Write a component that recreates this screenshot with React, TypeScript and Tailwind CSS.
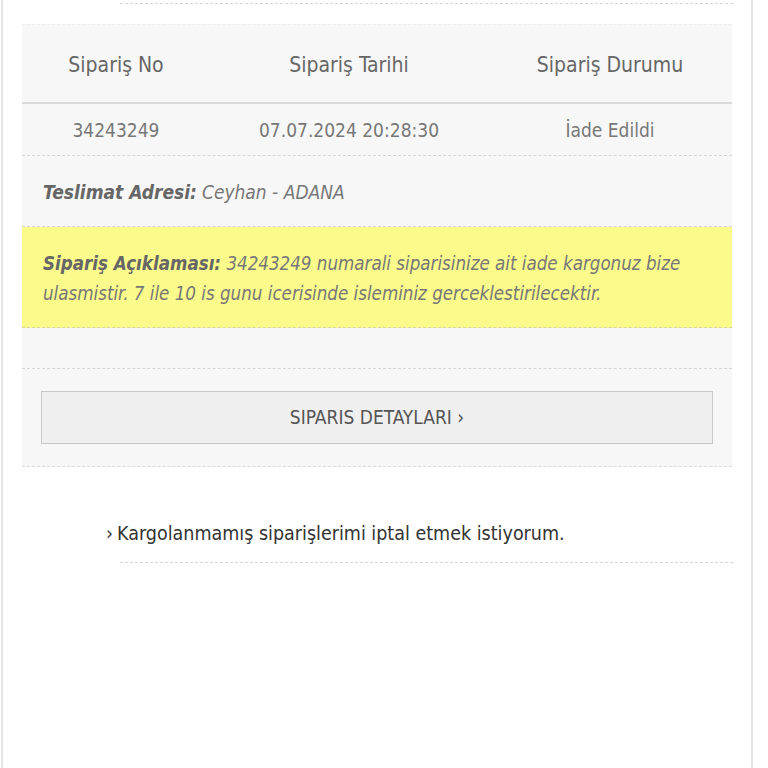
export default function App() {
  const font = { fontFamily: '"DejaVu Sans Condensed", "Liberation Sans", sans-serif' };
  return (
    <div className="w-[768px] h-[768px] bg-white overflow-hidden relative" style={font}>
      <div className="h-full ml-[1px] mr-[15px] border-l-2 border-r-2 border-[#e4e4e4]">
        <div className="ml-[117px] mr-[18px] h-[4px] border-b border-dashed border-[#d6d6d6]" />
        <div className="mt-[20px] mx-[19px] bg-[#f7f7f7] border-t border-[#eeeeee] border-b border-dashed border-b-[#d8d8d8]">
          <div className="flex h-[79px] items-center pt-[4px] border-b-2 border-[#d9d9d9] text-[21px] text-[#666666]">
            <div className="w-[188px] text-center">Sipariş No</div>
            <div className="w-[278px] text-center">Sipariş Tarihi</div>
            <div className="flex-1 text-center">Sipariş Durumu</div>
          </div>
          <div className="flex h-[52px] items-center pt-[2px] border-b border-dashed border-[#d6d6d6] text-[19px] text-[#777777]">
            <div className="w-[188px] text-center">34243249</div>
            <div className="w-[278px] text-center">07.07.2024 20:28:30</div>
            <div className="flex-1 text-center">İade Edildi</div>
          </div>
          <div className="flex h-[71px] items-center px-[21px] pt-[2px] border-b border-dashed border-[#d6d6d6] text-[19px] italic text-[#777777]">
            <span className="font-bold text-[#666666] mr-[5px]">Teslimat Adresi:</span>
            <span>Ceyhan - ADANA</span>
          </div>
          <div className="h-[101px] bg-[#fbfb8c] px-[21px] pt-[22px] border-b border-dashed border-[#d6d6a0] text-[18.6px] italic leading-[30px] text-[#777777]">
            <span className="font-bold text-[#666666]">Sipariş Açıklaması:</span>{' '}
            <span>34243249 numarali siparisinize ait iade kargonuz bize ulasmistir. 7 ile 10 is gunu icerisinde isleminiz gerceklestirilecektir.</span>
          </div>
          <div className="h-[41px] border-b border-dashed border-[#d6d6d6]" />
          <div className="px-[19px] pt-[22px] pb-[22px]">
            <div className="h-[53px] flex items-center justify-center bg-[#efefef] border border-[#c8c8c8] text-[19px] text-[#555555]">
              SIPARIS DETAYLARI ›
            </div>
          </div>
        </div>
        <div className="mt-[52px] ml-[103px] flex items-center text-[19.5px] text-[#333333]">
          <span className="mr-[4px] text-[#444444]">›</span>
          <span>Kargolanmamış siparişlerimi iptal etmek istiyorum.</span>
        </div>
        <div className="mt-[14px] ml-[117px] mr-[18px] border-b border-dashed border-[#d6d6d6]" />
      </div>
    </div>
  );
}
